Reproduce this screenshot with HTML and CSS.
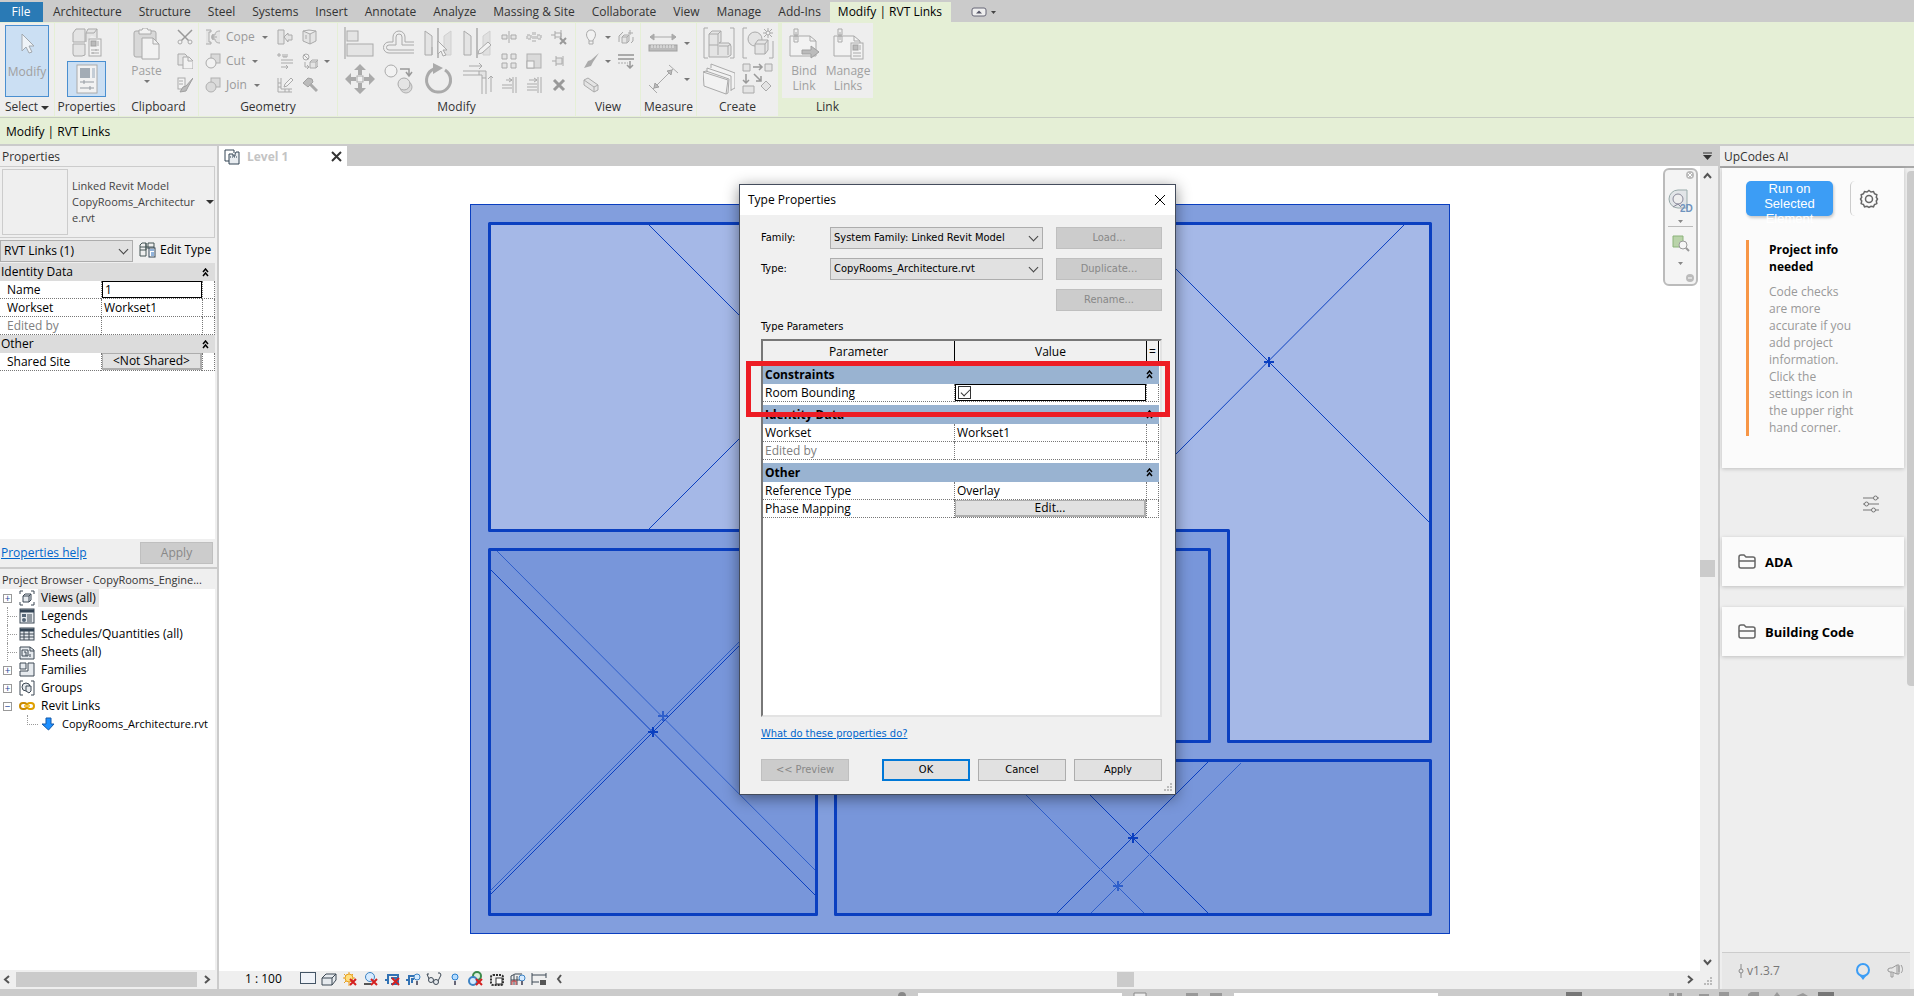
FILE: index.html
```html
<!DOCTYPE html>
<html lang="en">
<head>
<meta charset="utf-8">
<meta name="viewport" content="width=device-width, initial-scale=1">
<title>Modify | RVT Links</title>
<link rel="stylesheet" href="styles.css">
</head>
<body>

<!-- Ribbon tabs -->
<nav class="tabs">
  <button class="tab file">File</button>
  <button class="tab">Architecture</button>
  <button class="tab">Structure</button>
  <button class="tab">Steel</button>
  <button class="tab">Systems</button>
  <button class="tab">Insert</button>
  <button class="tab">Annotate</button>
  <button class="tab">Analyze</button>
  <button class="tab">Massing &amp; Site</button>
  <button class="tab">Collaborate</button>
  <button class="tab">View</button>
  <button class="tab">Manage</button>
  <button class="tab">Add-Ins</button>
  <button class="tab active">Modify | RVT Links</button>
  <button class="minimize" aria-label="Minimize ribbon">
    <svg width="26" height="10" viewBox="0 0 26 10"><rect x="1" y="1" width="14" height="8" rx="2" fill="#eee" stroke="#667"/><path d="M5 6.500l3-3 3 3z" fill="#556"/><path d="M20 4h5l-2.500 3z" fill="#444"/></svg>
  </button>
</nav>

<!-- Ribbon panels -->
<div class="ribbon">
  <section class="panel p-select">
    <div class="tools">
      <button class="big-btn on">
        <svg width="44" height="36" viewBox="0 0 44 36"><path d="M17 7v17l4-4 3 6 3-1-3-6h5z" fill="#eef3f8" stroke="#a2a8ae"/></svg>
        <span>Modify</span>
      </button>
    </div>
    <h2>Select <i class="caret dark"></i></h2>
  </section>

  <section class="panel p-props">
    <div class="tools">
      <div class="col big">
        <button aria-label="Type Properties"><svg width="32" height="32" viewBox="0 0 32 32"><path d="M2 6l3-4h9v13H2zM15 6l2-4h9v9M15 15V6h8l3-4M2 17h12v11l-3 1H3l-1-2z" class="l"/><rect x="18" y="12" width="12" height="17" class="w"/><rect x="20" y="14" width="5" height="5" class="d"/><path d="M27 14v5M20 23h8M20 26h8M25 22v2M22 25v2" class="s"/></svg></button>
        <button class="on" aria-label="Properties"><svg width="32" height="32" viewBox="0 0 32 32"><rect x="6" y="2" width="20" height="28" class="w"/><rect x="9" y="5" width="10" height="10" fill="#a3acb5"/><path d="M21 5h3v10h-3z" fill="#c4cdd6"/><path d="M9 19h14M9 25h14M13 17v4M19 23v4" stroke="#959ba2" fill="none"/></svg></button>
      </div>
    </div>
    <h2>Properties</h2>
  </section>

  <section class="panel p-clip">
    <div class="tools">
      <button class="big-btn">
        <svg width="32" height="32" viewBox="0 0 32 32"><rect x="3" y="3" width="22" height="26" rx="2" fill="#d8d8d8" stroke="#aaa"/><path d="M8 6V2h3l1-2h4l1 2h3v4z" class="w"/><path d="M11 10h11l6 6v15H11z" class="w"/><path d="M22 10v6h6" class="s"/></svg>
        <span>Paste</span>
        <i class="caret"></i>
      </button>
      <div class="col">
        <button aria-label="Cut to clipboard"><svg width="16" height="16" viewBox="0 0 16 16"><path d="M1 1l11 11M15 1L4 12" class="s2"/><circle cx="3" cy="13" r="2" class="w"/><circle cx="13" cy="13" r="2" class="w"/></svg></button>
        <button aria-label="Copy to clipboard"><svg width="16" height="16" viewBox="0 0 16 16"><path d="M1 1h7l2 2v9H1z" class="l"/><path d="M6 4h6l4 4v8H6zM11 4v4h4" class="w"/></svg></button>
        <button aria-label="Match type"><svg width="16" height="16" viewBox="0 0 16 16"><rect x="1" y="1" width="7" height="11" class="w"/><path d="M2 4h4M2 7h4" class="s"/><path d="M16 1l-7 8-3 1-3 5 6-1 2-4z" class="d"/></svg></button>
      </div>
    </div>
    <h2>Clipboard</h2>
  </section>

  <section class="panel p-geom">
    <div class="tools">
      <div class="col labelled">
        <button><svg width="16" height="16" viewBox="0 0 16 16"><path d="M1 1h5v2H4v10h2v2H1M15 2c-4 0-5 2-5 4H7v4h3c0 2 1 4 5 4M6 8h6M8 5v6" class="l"/></svg>Cope<i class="caret"></i></button>
        <button><svg width="16" height="16" viewBox="0 0 16 16"><rect x="6" y="1" width="9" height="9" class="m"/><circle cx="6" cy="10" r="5" class="w"/></svg>Cut<i class="caret"></i></button>
        <button><svg width="16" height="16" viewBox="0 0 16 16"><rect x="6" y="1" width="9" height="9" class="m"/><circle cx="6" cy="10" r="5" class="m"/></svg>Join<i class="caret"></i></button>
      </div>
      <div class="col">
        <button aria-label="Wall joins"><svg width="16" height="16" viewBox="0 0 16 16"><path d="M1 1h6v14H1zM7 8l4-4v2h4v5h-4v2z" class="l"/></svg></button>
        <button aria-label="Beam joins"><svg width="16" height="16" viewBox="0 0 16 16"><path d="M0 2h4M2 0v4M6 1v3h4V1M8 1v3M4 7h12M4 10h12" class="s"/><path d="M4 14h7M9 12l2 2-2 2" class="s"/></svg></button>
        <button aria-label="Split face"><svg width="16" height="16" viewBox="0 0 16 16"><path d="M1 1v14h14M4 1v11h11M1 6h3M1 10h3M8 12v3M12 12v3" class="s"/><path d="M7 10l1-3 6-6 2 2-6 6z" class="w"/></svg></button>
      </div>
      <div class="col">
        <button aria-label="Paint"><svg width="16" height="16" viewBox="0 0 16 16"><path d="M1 2l7 3v10l-7-3zM8 5l6-3v10l-6 3M1 2l6-1 7 1M4 6v4" class="l"/></svg></button>
        <button aria-label="Demolish set"><svg width="16" height="16" viewBox="0 0 16 16"><circle cx="4" cy="4" r="3" class="w"/><path d="M2 2l4 4M3 9v5h3M5 12l2 2-2 2" class="s"/><path d="M8 9l2-2h6v6l-2 2H8zM8 9h6v6M14 9l2-2" class="l"/></svg></button>
        <button aria-label="Demolish"><svg width="16" height="16" viewBox="0 0 16 16"><path d="M1 6l5-5 4 1 1 3-5 5z" class="d"/><path d="M8 7l7 7" stroke="#aaa" stroke-width="3"/></svg></button>
      </div>
      <div class="col carets"><span></span><span><i class="caret"></i></span><span></span></div>
    </div>
    <h2>Geometry</h2>
  </section>

  <section class="panel p-modify">
    <div class="tools">
      <div class="col big">
        <button aria-label="Align"><svg width="32" height="32" viewBox="0 0 32 32"><path d="M1 0v32" stroke="#999"/><rect x="3" y="4" width="11" height="10" class="l"/><rect x="3" y="17" width="26" height="12" class="l"/></svg></button>
        <button aria-label="Move"><svg width="32" height="32" viewBox="0 0 32 32"><path d="M16 1l6 6h-4v5h-4V7h-4zM16 31l-6-6h4v-5h4v5h4zM1 16l6-6v4h5v4H7v4zM31 16l-6 6v-4h-5v-4h5v-4z" fill="#aaa"/><rect x="13" y="13" width="6" height="6" class="w"/></svg></button>
      </div>
      <div class="col big">
        <button aria-label="Offset"><svg width="32" height="32" viewBox="0 0 32 32"><path d="M31 26H6a5 5 0 010-11h4V10a6 6 0 0112 0v5h9M31 23H6a2 2 0 010-5h7v-8a3 3 0 016 0v8h12" class="s"/></svg></button>
        <button aria-label="Copy"><svg width="32" height="32" viewBox="0 0 32 32"><circle cx="8" cy="8" r="6" class="w"/><path d="M17 6h9v6M23 9l3 4 3-4" class="s2"/><circle cx="23" cy="24" r="6" class="m"/><circle cx="21" cy="21" r="6" class="l"/></svg></button>
      </div>
      <div class="col big">
        <button aria-label="Mirror by pick axis"><svg width="32" height="32" viewBox="0 0 32 32"><path d="M3 4l7 5v19H3zM10 20v8" class="l"/><path d="M29 4l-7 5v19h7z" fill="#e0e0e0" stroke="#d0d0d0"/><path d="M16 1v30" stroke="#bbb" stroke-width="2"/><path d="M16 14v13l3-3 2 5 3-1-3-5h4z" class="w"/></svg></button>
        <button aria-label="Rotate"><svg width="32" height="32" viewBox="0 0 32 32"><path d="M12 6a12 12 0 1011 1" fill="none" stroke="#aaa" stroke-width="3"/><path d="M11 0l10 5-10 6z" fill="#aaa"/></svg></button>
      </div>
      <div class="col big">
        <button aria-label="Mirror by draw axis"><svg width="32" height="32" viewBox="0 0 32 32"><path d="M3 4l7 5v19H3z" class="l"/><path d="M29 4l-7 5v19h7z" fill="#e0e0e0" stroke="#d0d0d0"/><path d="M16 1v30" stroke="#bbb" stroke-width="2"/><path d="M17 27l1-4 9-8 3 3-9 8z" class="w"/></svg></button>
        <button aria-label="Trim corner"><svg width="32" height="32" viewBox="0 0 32 32"><path d="M2 8h16M2 12h16M21 15v16M25 15v16M8 3h13M18 0l3 3-3 3M30 29V13M27 16l3-3 3 3" class="s"/><path d="M18 8h7v7h-4v-3h-3z" class="l"/></svg></button>
      </div>
      <div class="col">
        <button aria-label="Split"><svg width="16" height="16" viewBox="0 0 16 16"><path d="M1 6h5v4H1zM10 6h5v4h-5zM8 2v12" class="l"/></svg></button>
        <button aria-label="Array"><svg width="16" height="16" viewBox="0 0 16 16"><path d="M1 1h5v5H1zM10 1h5v5h-5zM1 10h5v5H1zM10 10h5v5h-5z" class="l"/></svg></button>
        <button aria-label="Trim single"><svg width="16" height="16" viewBox="0 0 16 16"><path d="M1 8h10M1 11h10M12 0v16M15 0v16M5 3h6M8 1l3 2-3 2" class="s"/></svg></button>
      </div>
      <div class="col">
        <button aria-label="Split with gap"><svg width="16" height="16" viewBox="0 0 16 16"><path d="M1 6h4v4H1zM11 6h4v4h-4zM7 3v10M9 3v10" class="l" stroke-dasharray="3 1"/></svg></button>
        <button aria-label="Scale"><svg width="16" height="16" viewBox="0 0 16 16"><rect x="1" y="1" width="14" height="14" class="m"/><rect x="1" y="8" width="7" height="7" class="w"/></svg></button>
        <button aria-label="Trim multiple"><svg width="16" height="16" viewBox="0 0 16 16"><path d="M1 7h10M1 10h10M1 13h10M12 0v16M15 0v16M3 3h8M8 1l3 2-3 2" class="s"/></svg></button>
      </div>
      <div class="col">
        <button aria-label="Unpin"><svg width="16" height="16" viewBox="0 0 16 16"><path d="M0 6h4M4 2v8M4 4h6v4H4M10 1v8" class="s"/><path d="M9 9l6 6M15 9l-6 6" stroke="#999" stroke-width="2"/></svg></button>
        <button aria-label="Pin"><svg width="16" height="16" viewBox="0 0 16 16"><path d="M1 8h4M5 3v10M5 5h6v6H5M12 3v10" class="l"/></svg></button>
        <button aria-label="Delete"><svg width="16" height="16" viewBox="0 0 16 16"><path d="M3 3l10 10M13 3L3 13" stroke="#999" stroke-width="3"/></svg></button>
      </div>
    </div>
    <h2>Modify</h2>
  </section>

  <section class="panel p-view">
    <div class="tools">
      <div class="col">
        <button aria-label="Hide elements"><svg width="16" height="16" viewBox="0 0 16 16"><path d="M6 11C2 7 3 1 8 1s6 6 2 10v4H6zM6 12h4" class="w"/></svg></button>
        <button aria-label="Override graphics"><svg width="16" height="16" viewBox="0 0 16 16"><path d="M16 0l-8 7-3 1-4 7 7-2 2-4z" fill="#aaa"/></svg></button>
        <button aria-label="Selection box"><svg width="16" height="16" viewBox="0 0 16 16"><path d="M1 3l4-2 10 7v5l-4 2L1 8zM1 3l10 7v5M11 10l4-2" class="l"/></svg></button>
      </div>
      <div class="col carets"><span><i class="caret"></i></span><span><i class="caret"></i></span><span></span></div>
      <div class="col">
        <button aria-label="Displace elements"><svg width="16" height="16" viewBox="0 0 16 16"><path d="M4 8l2-2h5v6l-2 2H4zM4 8h5v6M9 8l2-2M1 13V7l4-4M15 8v4l-2 2M12 1v5M10 4h5" class="l"/></svg></button>
        <button aria-label="Linework"><svg width="16" height="16" viewBox="0 0 16 16"><path d="M0 2h16M0 6h16" stroke="#aaa" stroke-width="2"/><path d="M0 10h10" stroke="#aaa" stroke-dasharray="2 1"/><path d="M12 8v6M9 12l3 3 3-3" class="s2"/></svg></button>
      </div>
    </div>
    <h2>View</h2>
  </section>

  <section class="panel p-measure">
    <div class="tools">
      <div class="col big">
        <button aria-label="Measure"><svg width="32" height="32" viewBox="0 0 32 32"><path d="M3 10h26M7 7l-4 3 4 3zM25 7l4 3-4 3z" fill="#aaa" stroke="#aaa"/><rect x="2" y="18" width="28" height="6" class="d"/><path d="M5 18v3M8 18v3M11 18v3M14 18v3M17 18v3M20 18v3M23 18v3M26 18v3" stroke="#eee"/></svg></button>
        <button aria-label="Dimension"><svg width="32" height="32" viewBox="0 0 32 32"><path d="M6 26L26 6M2 22l8 8M22 2l9 8" class="s"/><path d="M7 25l1-5 4 4zM25 7l-5 1 4 4z" class="d"/></svg></button>
      </div>
      <div class="col big carets"><span><i class="caret"></i></span><span><i class="caret"></i></span></div>
    </div>
    <h2>Measure</h2>
  </section>

  <section class="panel p-create">
    <div class="tools">
      <div class="col big">
        <button aria-label="Create assembly"><svg width="32" height="32" viewBox="0 0 32 32"><path d="M5 1H1v30h4M27 1h4v30h-4" class="s"/><path d="M6 7l3-3h9v11l-2 1h10l2 3v9l-3 2H6zM6 7h9v21M18 4l-3 3M6 18h9M16 19h9v9M25 19l3-2" class="l"/></svg></button>
        <button aria-label="Create parts"><svg width="32" height="32" viewBox="0 0 32 32"><path d="M8 5V1l24 9v15l-4 2" class="w"/><path d="M4 9V5l24 8v15" class="w"/><path d="M0 9l1 14 22 8 2-14z" class="w"/><path d="M0 9l3-1 23 8-1 14-2 1" class="s"/></svg></button>
      </div>
      <div class="col big">
        <button aria-label="Create group"><svg width="32" height="32" viewBox="0 0 32 32"><path d="M5 1H1v30h4M27 31h4V14" class="s"/><circle cx="13" cy="12" r="7" class="l"/><path d="M13 17l3-4h10v10l-3 4H13zM13 17h10v10M23 17l3-4" class="l"/><path d="M26 1v10M21 6h10M22 2l8 8M30 2l-8 8" class="s"/><circle cx="26" cy="6" r="2" class="w"/></svg></button>
        <button aria-label="Create similar"><svg width="32" height="32" viewBox="0 0 32 32"><path d="M1 1h7v7H1zM23 1h7v7h-7zM1 23h11v7H1zM24 18l5 5-5 5-5-5z" class="l"/><path d="M11 4h9M17 1l3 3-3 3M4 11v9M1 17l3 3 3-3M12 11l7 7M19 13v5h-5" class="s2"/></svg></button>
      </div>
    </div>
    <h2>Create</h2>
  </section>

  <section class="panel p-link">
    <div class="tools">
      <button class="big-btn">
        <svg width="32" height="32" viewBox="0 0 32 32"><path d="M2 8h20l6 5v15H2z" class="w"/><path d="M22 8v5h6" class="s"/><path d="M6 1h4v6H6zM6 8h4v6H6zM8 4v8" class="s"/><path d="M14 22h9v-4l8 6-8 6v-4h-9z" class="d"/></svg>
        <span>Bind<br>Link</span>
      </button>
      <button class="big-btn">
        <svg width="32" height="32" viewBox="0 0 32 32"><path d="M2 8h20l6 5v15H2z" class="w"/><path d="M22 8v5h6" class="s"/><path d="M6 1h4v6H6zM6 8h4v6H6zM8 4v8" class="s"/><rect x="19" y="15" width="12" height="16" class="w"/><rect x="21" y="17" width="5" height="5" class="d"/><path d="M28 17v5M21 25h8M21 28h8" class="s"/></svg>
        <span>Manage<br>Links</span>
      </button>
    </div>
    <h2>Link</h2>
  </section>
</div>
<div class="options">Modify | RVT Links</div>

<main class="work">

  <!-- Properties + project browser -->
  <aside class="left">
    <h3>Properties</h3>
    <button class="type-selector">
      <span class="thumb"></span>
      <span class="type-name">Linked Revit Model<br>CopyRooms_Architectur<br>e.rvt</span>
      <i class="caret dark"></i>
    </button>
    <div class="filter">
      <div class="combo"><select aria-label="Element filter"><option>RVT Links (1)</option></select></div>
      <button class="edit-type"><svg width="17" height="16" viewBox="0 0 17 16"><path d="M1 8V3l2-2h4v7zM9 7V1h6v5M7 8V1M1 8v6h6V8M1 5h14" fill="none" stroke="#455"/><rect x="10" y="6" width="6" height="9" fill="#fff" stroke="#345"/><path d="M11 8h4M12 11h3M12 13h3" stroke="#2468b8"/></svg>Edit Type</button>
    </div>
    <div class="grid-wrap">
      <table class="props">
        <colgroup><col><col class="col-value"><col class="col-end"></colgroup>
        <tr class="group"><th colspan="2">Identity Data</th><th><svg width="7" height="9" viewBox="0 0 7 9"><path d="M1 4l2.500-3L6 4M1 8l2.500-3L6 8" class="up"/></svg></th></tr>
        <tr><td><label for="name">Name</label></td><td class="field"><input id="name" type="text" value="1"></td><td></td></tr>
        <tr><td>Workset</td><td>Workset1</td><td></td></tr>
        <tr class="dim"><td>Edited by</td><td></td><td></td></tr>
        <tr class="group"><th colspan="2">Other</th><th><svg width="7" height="9" viewBox="0 0 7 9"><path d="M1 4l2.500-3L6 4M1 8l2.500-3L6 8" class="up"/></svg></th></tr>
        <tr><td>Shared Site</td><td class="field"><button class="cell-btn">&lt;Not Shared&gt;</button></td><td></td></tr>
      </table>
    </div>
    <div class="props-foot"><a href="#">Properties help</a><button class="btn" disabled>Apply</button></div>

    <h3 class="browser-head">Project Browser - CopyRooms_Engine...</h3>
    <ul class="tree">
      <li><i class="exp">+</i><svg width="16" height="16" viewBox="0 0 16 16"><path d="M4 1H1v3M12 1h3v3M1 12v3h3M15 12v3h-3" class="k"/><path d="M4 6l2-2h6v6l-2 2H4zM4 6h6v6M10 6l2-2" class="k g"/></svg><span class="sel">Views (all)</span></li>
      <li><i class="dots"></i><svg width="16" height="16" viewBox="0 0 16 16"><rect x="1" y="1" width="14" height="14" class="k g"/><path d="M1 3h14" stroke="#345" stroke-width="3"/><rect x="3" y="6" width="4" height="3" fill="#567"/><circle cx="5" cy="12" r="2" fill="#567"/><path d="M8 7h5M8 9h5M8 11h5M8 13h5" class="k"/></svg><span>Legends</span></li>
      <li><i class="dots"></i><svg width="16" height="16" viewBox="0 0 16 16"><rect x="1" y="2" width="14" height="12" class="k g"/><path d="M1 4h14" stroke="#345" stroke-width="3"/><path d="M1 8h14M1 11h14M5 4v10M10 4v10" class="k"/></svg><span>Schedules/Quantities (all)</span></li>
      <li><i class="dots"></i><svg width="16" height="16" viewBox="0 0 16 16"><path d="M1 3h10l4 3v9H1z" class="k g"/><path d="M3 6h6v6H3zM5 8h2v4M11 3v4h4M11 10v3" class="k"/></svg><span>Sheets (all)</span></li>
      <li><i class="exp">+</i><svg width="16" height="16" viewBox="0 0 16 16"><path d="M1 1h6v6H1zM1 9h6V9h2V1h6v13H1z" class="k g"/></svg><span>Families</span></li>
      <li><i class="exp">+</i><svg width="16" height="16" viewBox="0 0 16 16"><path d="M4 1H1v14h3M12 1h3v14h-3" class="k"/><circle cx="7" cy="7" r="4" class="k g"/><path d="M7 6h5v5l-2 2-3-2z" class="k g"/></svg><span>Groups</span></li>
      <li><i class="exp">−</i><svg width="16" height="16" viewBox="0 0 16 16"><rect x="1" y="5" width="7" height="6" rx="3" fill="none" stroke="#c98a00" stroke-width="2"/><rect x="8" y="5" width="7" height="6" rx="3" fill="none" stroke="#dfa000" stroke-width="2"/><path d="M5 8h6" stroke="#f5c542" stroke-width="2"/></svg><span>Revit Links</span></li>
      <li class="child"><i class="dots"></i><svg width="16" height="16" viewBox="0 0 16 16"><path d="M6 2h5v6h3l-5.500 6L2 8h4z" fill="#1e90ff" stroke="#1559a8"/></svg><span>CopyRooms_Architecture.rvt</span></li>
    </ul>
    <div class="hscroll">
      <svg width="14" height="15" viewBox="0 0 14 15"><path d="M9 4L5 7.500 9 11" class="arr"/></svg>
      <i></i>
      <svg width="14" height="15" viewBox="0 0 14 15"><path d="M5 4l4 3.500L5 11" class="arr"/></svg>
    </div>
  </aside>

  <!-- Drawing area -->
  <section class="view">
    <div class="view-tabs">
      <div class="view-tab"><svg width="16" height="16" viewBox="0 0 16 16"><path d="M5 12H1V1h9v3" fill="#fff" stroke="#345"/><path d="M5 5h4v2h2V5l1-2h3v12H5z" fill="#e8ecf0" stroke="#345"/><path d="M6 8h8" stroke="#345" stroke-dasharray="1 1"/></svg><span>Level 1</span><button aria-label="Close view"><svg width="11" height="11" viewBox="0 0 11 11"><path d="M1 1l9 9M10 1L1 10" stroke="#333" stroke-width="2"/></svg></button></div>
      <svg class="tab-menu" width="9" height="8" viewBox="0 0 9 8"><path d="M0 1h9" stroke="#333" stroke-width="1"/><path d="M0 3h9L4.500 8z" fill="#333"/></svg>
    </div>
    <div class="canvas-row">
      <div class="canvas">
        <svg class="plan" width="980" height="730" viewBox="470 204 980 730">
          <rect x="470.500" y="204.500" width="979" height="729" fill="#829edd" stroke="#0a3fc0"/>
          <g stroke="#0a3fc0" stroke-width="3" stroke-linejoin="round">
            <path d="M489.500 223.500h941v518h-202v-211h-739z" fill="#a5b8e7"/>
            <rect x="489.500" y="549.500" width="327" height="365" fill="#7896da"/>
            <path d="M835.500 549.500h374v192h-374z" fill="#7896da"/>
            <rect x="835.500" y="760.500" width="595" height="154" fill="#7896da"/>
          </g>
          <g fill="none" stroke="#0a3fc0">
            <path d="M647 223L801 377 648 530M1404 225L1175 455M1175 268l255 255"/>
            <path d="M490 569l325 326M490 895L740 645M1090 795l118 118M1057 913l151-151"/>
            <path d="M497 551l318 319M490 891L740 641M1026 795l118 118M1091 913l150-150" stroke="#2f5fcb"/>
          </g>
          <path d="M1264 362h10M1269 357v10M648 732h10M653 727v10M1128 838h10M1133 833v10" stroke="#0a3fc0" stroke-width="2"/>
          <path d="M658 716h10M663 711v10M1113 886h10M1118 881v10" stroke="#2f5fcb" stroke-width="2"/>
        </svg>
        <div class="navbar">
          <svg width="35" height="118" viewBox="0 0 35 118">
            <rect x="1" y="1" width="33" height="116" rx="5" fill="#f4f4f4" stroke="#bbb" stroke-width="2"/>
            <circle cx="27" cy="7" r="4" fill="#bbb"/><path d="M25 5l4 4M29 5l-4 4" stroke="#fff"/>
            <path d="M15 22h9v18h-9a9 9 0 010-18z" fill="#e2e5e8" stroke="#9aa"/><circle cx="15" cy="31" r="5" fill="#eee" stroke="#889"/><path d="M10 39l5-3 3 3" fill="none" stroke="#889"/>
            <text x="17" y="44" class="two-d">2D</text>
            <path d="M15 52h5l-2.500 3zM15 94h5l-2.500 3z" fill="#888"/>
            <path d="M5 58.500h25" stroke="#bbb"/>
            <path d="M10 68h10v11H10z" fill="#b9d3a9" stroke="#8cb37a"/><circle cx="20" cy="77" r="4" fill="#f6f6f6" stroke="#999"/><path d="M23 80l3 3" stroke="#999" stroke-width="2"/>
            <circle cx="27" cy="110" r="4" fill="#bbb"/><path d="M25 110h4" stroke="#fff"/>
          </svg>
        </div>
      </div>
      <div class="vscroll">
        <svg width="15" height="18" viewBox="0 0 15 18"><path d="M4 12l3.500-4 3.500 4" class="arr"/></svg>
        <i></i>
        <svg width="15" height="18" viewBox="0 0 15 18"><path d="M4 7l3.500 4L11 7" class="arr"/></svg>
      </div>
    </div>
    <div class="view-bar">
      <span class="scale">1 : 100</span>
      <div class="view-icons">
        <svg width="16" height="16" viewBox="0 0 16 16"><rect x="0.500" y="1.500" width="15" height="11" fill="#f0f3f8" stroke="#456"/></svg>
        <svg width="16" height="16" viewBox="0 0 16 16"><path d="M1 7l4-4h10v6l-4 5H1zM1 7h10v7M11 7l4-4" class="k g"/></svg>
        <svg width="16" height="16" viewBox="0 0 16 16"><path d="M7 1v14M1 7h12M2 3l9 9M11 3l-9 9" stroke="#e8a020"/><circle cx="7" cy="7" r="4" fill="#ffdf80" stroke="#e8a020"/><path d="M8 8l6 6M14 8l-6 6" class="r"/></svg>
        <svg width="16" height="16" viewBox="0 0 16 16"><circle cx="7" cy="6" r="4.500" fill="#d6ebff" stroke="#3d83c4"/><path d="M1 13h7" stroke="#555" stroke-width="2"/><path d="M8 8l6 6M14 8l-6 6" class="r"/></svg>
        <svg width="16" height="16" viewBox="0 0 16 16"><path d="M1 9h3M4 3v10M4 4h10v9M7 7h5v6H7" fill="none" stroke="#3272b4" stroke-width="2"/><path d="M8 7l7 7M15 7l-7 7" class="r"/></svg>
        <svg width="16" height="16" viewBox="0 0 16 16"><path d="M1 9h2M4 4v10M4 5h5M6 8h3M7 8v4" fill="none" stroke="#3272b4" stroke-width="2"/><circle cx="12" cy="6" r="3" fill="#d6ebff" stroke="#3d83c4"/><path d="M11 10h2v4h-2z" fill="#667"/></svg>
        <svg width="16" height="16" viewBox="0 0 16 16"><path d="M1 3l2 5M1 3h2M12 2h2l1 2-3 6" class="k"/><circle cx="5" cy="9" r="2.500" class="k g"/><circle cx="10" cy="11" r="2.500" class="k g"/></svg>
        <svg width="16" height="16" viewBox="0 0 16 16"><circle cx="8" cy="6" r="3" fill="#b4dcff" stroke="#2a7fd0"/><path d="M7 10h2v4H7z" fill="#667"/></svg>
        <svg width="16" height="16" viewBox="0 0 16 16"><circle cx="9" cy="5" r="4" fill="#d9efd9" stroke="#3a8a4a" stroke-width="2"/><circle cx="5" cy="10" r="4" fill="#d6ebff" stroke="#3d83c4" stroke-width="2"/><path d="M8 8l6 6M14 8l-6 6" class="r"/></svg>
        <svg width="16" height="16" viewBox="0 0 16 16"><rect x="2" y="4" width="12" height="10" rx="2" fill="none" stroke="#333" stroke-width="2" stroke-dasharray="2 1"/><rect x="7" y="7" width="6" height="6" fill="#fff" stroke="#333"/></svg>
        <svg width="16" height="16" viewBox="0 0 16 16"><path d="M1 5l4-2h7M1 5v9M4 4v10M7 5v9M1 9h10" class="k"/><path d="M2 14v-4h4v4" fill="none" stroke="#c33"/><circle cx="12" cy="7" r="3" fill="#d6ebff" stroke="#3d83c4"/><path d="M11 10h2v4h-2z" fill="#667"/></svg>
        <svg width="16" height="16" viewBox="0 0 16 16"><path d="M1 2v12M15 2v5M1 4h14M1 11h7" class="k"/><rect x="9" y="9" width="6" height="5" fill="#555"/></svg>
        <svg width="16" height="16" viewBox="0 0 16 16"><path d="M9 4L6 8l3 4" class="arr"/></svg>
      </div>
      <div class="view-hscroll"><i></i></div>
      <svg width="15" height="15" viewBox="0 0 15 15"><path d="M5 4l4 3.500L5 11" class="arr"/></svg>
      <svg class="grip" width="9" height="9" viewBox="0 0 9 9"><path d="M6 0h2v2H6zM3 3h2v2H3zM6 3h2v2H6zM0 6h2v2H0zM3 6h2v2H3zM6 6h2v2H6z" fill="#bbb"/></svg>
    </div>
  </section>

  <!-- UpCodes panel -->
  <aside class="right">
    <h3>UpCodes AI</h3>
    <div class="up-body">
      <div class="up-main">
        <div class="card intro">
          <div class="up-actions">
            <button class="run">Run on Selected Element</button>
            <button class="gear" aria-label="Settings"><svg width="20" height="20" viewBox="0 0 20 20"><path d="M10 1.500l2 1.500 2.500-.5 1 2.300 2.300 1-.5 2.500L18.500 10l-1.200 2 .5 2.500-2.300 1-1 2.300-2.500-.5-2 1.200-2-1.200-2.500.5-1-2.300-2.300-1 .5-2.500L1.500 10l1.200-1.700-.5-2.500 2.300-1 1-2.300L8 3z" fill="none" stroke="#666" stroke-width="1.500"/><circle cx="10" cy="10" r="3.500" fill="none" stroke="#666" stroke-width="1.500"/></svg></button>
          </div>
          <div class="notice">
            <h4>Project info needed</h4>
            <p>Code checks are more accurate if you add project information. Click the settings icon in the upper right hand corner.</p>
          </div>
        </div>
        <button class="sliders" aria-label="Filter"><svg width="16" height="18" viewBox="0 0 16 18"><path d="M0 3h16M0 9h16M0 15h16" stroke="#777" stroke-width="1"/><g fill="#eee" stroke="#777"><circle cx="12.500" cy="3" r="2"/><circle cx="3.500" cy="9" r="2"/><circle cx="10.500" cy="15" r="2"/></g></svg></button>
        <button class="card folder"><svg width="18" height="16" viewBox="0 0 18 16"><path d="M1 3a2 2 0 012-2h3l2 2h7a2 2 0 012 2v7a2 2 0 01-2 2H3a2 2 0 01-2-2zM1 7h16" fill="none" stroke="#666" stroke-width="1.500"/></svg>ADA</button>
        <button class="card folder"><svg width="18" height="16" viewBox="0 0 18 16"><path d="M1 3a2 2 0 012-2h3l2 2h7a2 2 0 012 2v7a2 2 0 01-2 2H3a2 2 0 01-2-2zM1 7h16" fill="none" stroke="#666" stroke-width="1.500"/></svg>Building Code</button>
      </div>
      <div class="up-scroll"><i></i></div>
    </div>
    <footer class="up-foot">
      <svg width="6" height="14" viewBox="0 0 6 14"><path d="M3 0v5M3 9v5" stroke="#888"/><circle cx="3" cy="7" r="2" fill="none" stroke="#888"/></svg>
      <span>v1.3.7</span>
      <svg class="pin" width="14" height="18" viewBox="0 0 14 18"><circle cx="7" cy="8" r="6" fill="none" stroke="#3c9df5" stroke-width="2"/><path d="M4 14h6l-3 4z" fill="#3c9df5"/></svg>
      <svg width="16" height="14" viewBox="0 0 16 14"><path d="M1 5l2-1h2l5-3v9L5 8H3L1 7zM4 8v5h2V9M12 2v6M14 1c2 3 2 6 0 8M10 1h2v9h-2" fill="none" stroke="#999"/></svg>
    </footer>
  </aside>
</main>

<!-- Status bar, runs past the bottom edge -->
<div class="status">
  <svg class="status-search" width="12" height="6" viewBox="0 0 12 6"><path d="M2 6a4 4 0 018 0z" fill="#888"/></svg>
  <span class="status-box"></span>
  <svg width="100" height="6" viewBox="0 0 100 6"><path d="M6 6V3h12v3" fill="#eee" stroke="#888"/><path d="M58 3h12v3H58zM82 3h12v3H82z" fill="#999"/></svg>
  <span class="status-box"></span>
  <svg class="status-icons" width="270" height="6" viewBox="0 0 270 6"><path d="M2 2h16v4H2zM254 2h16v4h-16z" fill="#777"/><path d="M105 3h5v3h-5zM113 3h5v3h-5zM135 4h10v2h-10zM155 2h10v4h-10zM184 4l3-2h8v4h-11zM210 6l3-4 3 4zM232 6l7-3 5 3z" fill="#999"/></svg>
</div>

<!-- Type Properties dialog -->
<div class="dialog" role="dialog" aria-label="Type Properties">
  <div class="title"><span>Type Properties</span><button aria-label="Close"><svg width="12" height="12" viewBox="0 0 12 12"><path d="M1 1l10 10M11 1L1 11" stroke="#000"/></svg></button></div>
  <div class="dialog-body">
    <div class="form">
      <label for="family">Family:</label>
      <div class="combo"><select id="family"><option>System Family: Linked Revit Model</option></select></div>
      <button class="btn" disabled>Load...</button>
      <label for="type">Type:</label>
      <div class="combo"><select id="type"><option>CopyRooms_Architecture.rvt</option></select></div>
      <button class="btn" disabled>Duplicate...</button>
      <button class="btn rename" disabled>Rename...</button>
    </div>
    <div class="caption">Type Parameters</div>
    <div class="params-wrap">
      <table class="params">
        <colgroup><col><col class="col-value"><col class="col-end"></colgroup>
        <tr class="head"><th>Parameter</th><th>Value</th><th>=</th></tr>
        <tr class="group"><th colspan="2">Constraints</th><th><svg width="7" height="9" viewBox="0 0 7 9"><path d="M1 4l2.500-3L6 4M1 8l2.500-3L6 8" class="up"/></svg></th></tr>
        <tr><td><label for="bounding">Room Bounding</label></td><td class="field"><span class="check-cell"><input id="bounding" type="checkbox" checked></span></td><td></td></tr>
        <tr class="group"><th colspan="2">Identity Data</th><th><svg width="7" height="9" viewBox="0 0 7 9"><path d="M1 4l2.500-3L6 4M1 8l2.500-3L6 8" class="up"/></svg></th></tr>
        <tr><td>Workset</td><td>Workset1</td><td></td></tr>
        <tr class="dim"><td>Edited by</td><td></td><td></td></tr>
        <tr class="group"><th colspan="2">Other</th><th><svg width="7" height="9" viewBox="0 0 7 9"><path d="M1 4l2.500-3L6 4M1 8l2.500-3L6 8" class="up"/></svg></th></tr>
        <tr><td>Reference Type</td><td>Overlay</td><td></td></tr>
        <tr><td>Phase Mapping</td><td class="field"><button class="cell-btn">Edit...</button></td><td></td></tr>
      </table>
      <div class="highlight"></div>
    </div>
    <a class="what" href="#">What do these properties do?</a>
    <div class="actions">
      <button class="btn preview" disabled>&lt;&lt; Preview</button>
      <button class="btn ok">OK</button>
      <button class="btn">Cancel</button>
      <button class="btn">Apply</button>
    </div>
  </div>
  <svg class="grip" width="9" height="9" viewBox="0 0 9 9"><path d="M6 0h2v2H6zM3 3h2v2H3zM6 3h2v2H6zM0 6h2v2H0zM3 6h2v2H3zM6 6h2v2H6z" fill="#bbb"/></svg>
</div>

</body>
</html>
```

FILE: styles.css
```css
* {
  box-sizing: border-box;
}

body {
  margin: 0;
  height: 100vh;
  display: flex;
  flex-direction: column;
  overflow: hidden;
  position: relative;
  background: #cbcbcb;
  color: #000;
  font-family: "Open Sans", "Noto Sans", sans-serif;
  font-size: 12px;
  line-height: 18px;
}

button, input, select {
  font: inherit;
  color: inherit;
  margin: 0;
  padding: 0;
  border: 0;
  background: none;
}

h2, h3, h4, p, ul {
  margin: 0;
  padding: 0;
  font-size: 12px;
  font-weight: normal;
}

svg {
  display: block;
  flex: none;
}

a {
  color: #0066cc;
}

/* Shared icon strokes */
.l { fill: #e4e4e4; stroke: #aaa; }
.w { fill: #f2f2f2; stroke: #aaa; }
.d { fill: #bbb; stroke: #a0a0a0; }
.m { fill: #dadada; stroke: #b0b0b0; }
.s { fill: none; stroke: #aaa; }
.s2 { fill: none; stroke: #999; stroke-width: 1.5; }
.k { fill: none; stroke: #3d4854; }
.g { fill: #e6eaee; }
.r { fill: none; stroke: #d42020; stroke-width: 2; }
.arr { fill: none; stroke: #555; stroke-width: 2; }
.up { fill: none; stroke: #000; stroke-width: 1.5; }

.caret {
  display: inline-block;
  flex: none;
  border: 3px solid transparent;
  border-top-color: #777;
  border-bottom: 0;
}

.caret.dark {
  border-width: 4px;
  border-top-color: #333;
  border-bottom: 0;
  vertical-align: middle;
}

/* Ribbon tabs */
.tabs {
  display: flex;
  flex: none;
  height: 22px;
  padding-top: 2px;
}

.tab {
  padding: 0 9px 0 8px;
  line-height: 20px;
  color: #333;
  white-space: nowrap;
}

.tab.file {
  width: 43px;
  margin-right: 2px;
  background: #2a7ab5;
  color: #fff;
}

.tab.active {
  background: #e5efd6;
  color: #000;
}

.minimize {
  margin-left: 20px;
}

/* Ribbon panels */
.ribbon {
  display: flex;
  flex: none;
  gap: 1px;
  height: 96px;
  padding: 1px 0;
  background: #e5efd6;
  border-bottom: 1px solid #c6cbc2;
}

.panel {
  flex: none;
  background: #eee;
}

.panel h2 {
  text-align: center;
  color: #333;
}

.panel .tools {
  display: flex;
  height: 75px;
  padding-top: 2px;
}

.p-select { width: 54px; }
.p-props { width: 63px; }
.p-clip { width: 79px; }
.p-geom { width: 138px; }
.p-modify { width: 237px; }
.p-view { width: 64px; }
.p-measure { width: 55px; }
.p-create { width: 81px; }
.p-link { width: 91px; margin-left: 3px; }

.p-select .tools { padding-left: 5px; }
.p-props .tools { padding-left: 12px; }
.p-clip .tools { padding-left: 8px; gap: 6px; }
.p-geom .tools { padding-left: 2px; }
.p-modify .tools,
.p-measure .tools,
.p-create .tools { padding-left: 2px; }
.p-view .tools { padding-left: 2px; }
.p-link h2 { background: #e5efd6; }

.col {
  display: flex;
  flex-direction: column;
  width: 25px;
}

.col button,
.col span {
  display: flex;
  align-items: center;
  justify-content: center;
  height: 24px;
}

.col.big {
  width: 39px;
}

.col.big button,
.col.big span {
  height: 36px;
}

.col.carets,
.col.big.carets {
  width: 10px;
}

.col.labelled {
  width: 71px;
  color: #9a9a9a;
}

.col.labelled button {
  justify-content: flex-start;
  padding-left: 4px;
}

.col.labelled svg {
  margin-right: 5px;
}

.col.labelled .caret {
  margin-left: 7px;
}

.col.big .on,
.big-btn.on {
  background: #cbdff3;
  border: 1px solid #4a8fd0;
}

.big-btn {
  display: flex;
  flex-direction: column;
  align-items: center;
  width: 39px;
  height: 72px;
  padding-top: 2px;
  color: #a0a0a0;
  line-height: 15px;
}

.big-btn span {
  margin-top: 3px;
}

.big-btn .caret {
  margin-top: 2px;
}

.big-btn svg {
  margin-top: 1px;
}

.p-select .big-btn,
.p-link .big-btn {
  width: 44px;
}

.p-select .big-btn {
  padding-top: 0;
}

.p-select .big-btn span {
  margin-top: 1px;
}

.options {
  flex: none;
  height: 28px;
  padding-left: 6px;
  line-height: 28px;
  background: #e5efd6;
  border-bottom: 2px solid #cbcbcb;
}

/* Main work area */
.work {
  display: flex;
  flex: 1;
  min-height: 0;
}

/* Left column */
.left {
  display: flex;
  flex-direction: column;
  width: 219px;
  flex: none;
  background: #efefef;
  border-right: 2px solid #cbcbcb;
}

.left h3,
.right h3 {
  flex: none;
  height: 20px;
  padding: 2px 2px 0;
  color: #333;
  white-space: nowrap;
}

.left .browser-head {
  font-size: 11px;
}

.type-selector {
  display: flex;
  align-items: center;
  flex: none;
  width: 215px;
  height: 72px;
  padding-left: 2px;
  border: 1px solid #ccc;
  border-left: 0;
  text-align: left;
  color: #444;
  line-height: 16px;
}

.thumb {
  width: 66px;
  height: 66px;
  flex: none;
  border: 1px solid #ccc;
}

.type-name {
  flex: 1;
  margin-left: 4px;
  font-size: 11px;
}

.filter {
  display: flex;
  flex: none;
  align-items: center;
  height: 25px;
}

.filter .combo {
  width: 133px;
}

.combo {
  position: relative;
  height: 22px;
}

.combo select {
  appearance: none;
  width: 100%;
  height: 100%;
  padding: 0 20px 0 3px;
  border: 1px solid #adadad;
  background: #e1e1e1;
}

.combo::after {
  content: "";
  position: absolute;
  right: 6px;
  top: 6px;
  width: 6px;
  height: 6px;
  border: solid #444;
  border-width: 0 1px 1px 0;
  transform: rotate(45deg);
  pointer-events: none;
}

.edit-type {
  display: flex;
  align-items: center;
  gap: 4px;
  margin-left: 6px;
  padding-bottom: 2px;
  white-space: nowrap;
}

.grid-wrap {
  width: 215px;
  height: 276px;
  flex: none;
  background: #fff;
}

table {
  width: 100%;
  table-layout: fixed;
  border-collapse: separate;
  border-spacing: 0;
}

td, th {
  height: 18px;
  padding: 0 2px;
  line-height: 16px;
  text-align: left;
  font-weight: normal;
  white-space: nowrap;
}

td {
  border-bottom: 1px dotted #777;
}

td + td {
  border-left: 1px dotted #777;
}

td:last-child {
  border-right: 1px dotted #777;
}

td.field {
  padding: 0;
}

td:first-child {
  padding-left: 7px;
}

.dim {
  color: #808080;
}

.props .col-value { width: 101px; }
.params .col-value { width: 192px; }
.col-end { width: 13px; }

.props .group th {
  padding-left: 1px;
  background: #dcdcdc;
}

.props input {
  display: block;
  width: 100%;
  height: 17px;
  padding: 0 2px;
  border: 1px solid #000;
  background: #fff;
}

.cell-btn {
  display: block;
  width: 100%;
  height: 17px;
  line-height: 14px;
  background: #e1e1e1;
  border: 1px solid #adadad;
  border-right-width: 2px;
  border-bottom-width: 2px;
}

.props-foot {
  display: flex;
  flex: none;
  align-items: center;
  justify-content: space-between;
  height: 30px;
  padding: 0 4px 0 1px;
  border-bottom: 2px solid #cbcbcb;
}

.btn {
  height: 22px;
  border: 1px solid #adadad;
  background: #e1e1e1;
  text-align: center;
}

.btn:disabled {
  border-color: #bfbfbf;
  background: #ccc;
  color: #888;
}

.props-foot .btn {
  width: 73px;
}

/* Project browser tree */
.tree {
  flex: 1;
  width: 215px;
  list-style: none;
  background: #fff;
  overflow: hidden;
}

.tree li {
  display: flex;
  align-items: center;
  height: 18px;
  padding-left: 3px;
  white-space: nowrap;
}

.tree span {
  margin-left: 3px;
  padding: 0 3px;
}

.tree .sel {
  background: #e2e2e2;
}

.exp {
  width: 9px;
  height: 9px;
  margin-right: 7px;
  border: 1px solid #999;
  font-style: normal;
  font-size: 10px;
  line-height: 7px;
  text-align: center;
  color: #234a9a;
}

.dots {
  width: 11px;
  height: 18px;
  margin: 0 1px 0 4px;
  border-left: 1px dotted #999;
  background: repeating-linear-gradient(90deg, #999 0 1px, transparent 1px 2px) 0 50% / 100% 1px no-repeat;
}

.tree .child {
  padding-left: 23px;
  font-size: 11px;
}

.child .dots {
  height: 10px;
  margin-right: 2px;
  margin-bottom: 8px;
  border-bottom: 1px dotted #999;
  background: none;
}

.tree .child span {
  padding: 0 0 0 3px;
}

.hscroll {
  display: flex;
  align-items: center;
  flex: none;
  height: 19px;
}

.hscroll i {
  width: 181px;
  height: 15px;
  margin: 0 3px 0 2px;
  background: #cbcbcb;
}

/* Drawing view */
.view {
  display: flex;
  flex: 1;
  flex-direction: column;
  min-width: 0;
  background: #efefef;
}

.view-tabs {
  display: flex;
  flex: none;
  align-items: center;
  justify-content: space-between;
  height: 20px;
  padding-right: 6px;
  background: #cbcbcb;
}

.view-tab {
  display: flex;
  align-items: center;
  width: 128px;
  height: 20px;
  padding: 1px 5px 0;
  background: #fff;
  color: #c4c4c4;
  font-weight: bold;
}

.view-tab span {
  flex: 1;
  margin-left: 7px;
}

.canvas-row {
  display: flex;
  flex: 1;
  min-height: 0;
}

.canvas {
  position: relative;
  display: flex;
  flex: 1;
  align-items: center;
  justify-content: center;
  min-width: 0;
  background: #fff;
}

.navbar {
  position: absolute;
  top: 2px;
  right: 2px;
}

.two-d {
  font: bold 10px "Liberation Sans", sans-serif;
  fill: #6f93bd;
}

.vscroll {
  display: flex;
  flex-direction: column;
  justify-content: space-between;
  align-items: flex-start;
  width: 18px;
  flex: none;
}

.vscroll i {
  width: 15px;
  height: 17px;
  background: #cbcbcb;
}

.view-bar {
  display: flex;
  flex: none;
  align-items: center;
  height: 18px;
  padding: 0 5px 2px 26px;
}

.scale {
  width: 55px;
}

.view-icons {
  display: flex;
  gap: 5px;
}

.view-hscroll {
  display: flex;
  justify-content: center;
  flex: 1;
}

.view-hscroll i {
  width: 17px;
  height: 15px;
  background: #cbcbcb;
}

.view-bar .grip {
  margin: 4px 0 0 6px;
}

/* UpCodes panel */
.right {
  display: flex;
  flex-direction: column;
  width: 196px;
  flex: none;
  background: #eee;
  border-left: 2px solid #cbcbcb;
}

.right h3 {
  height: 22px;
  padding-left: 4px;
  border-bottom: 2px solid #a8a8a8;
}

.up-body {
  display: flex;
  flex: 1;
  min-height: 0;
}

.up-main {
  display: flex;
  flex: 1;
  flex-direction: column;
  margin-left: 2px;
}

.card {
  background: #fbfbfb;
  box-shadow: 0 1px 4px rgba(0, 0, 0, 0.2);
}

.intro {
  padding: 13px 24px 32px;
}

.up-actions {
  display: flex;
  gap: 17px;
}

.run {
  width: 87px;
  height: 35px;
  padding: 0 10px;
  border-radius: 5px;
  background: #3c9df5;
  box-shadow: 1px 2px 3px rgba(0, 0, 0, 0.2);
  color: #fff;
  font: 13px/15px "Liberation Sans", Arial, sans-serif;
  display: flex;
  justify-content: center;
  align-items: flex-start;
}

.gear {
  display: flex;
  align-items: center;
  padding-left: 8px;
  border-left: 1px solid #ccc;
  border-radius: 5px;
}

.notice {
  width: 112px;
  margin-top: 24px;
  padding: 1px 0 0 20px;
  border-left: 3px solid #f79646;
  line-height: 17px;
}

.notice h4 {
  font-weight: bold;
}

.notice p {
  margin-top: 8px;
  color: #999;
}

.sliders {
  align-self: flex-end;
  margin: 27px 25px 24px 0;
}

.folder {
  display: flex;
  align-items: center;
  gap: 9px;
  height: 49px;
  margin-bottom: 21px;
  padding-left: 16px;
  font-size: 13px;
  font-weight: bold;
}

.up-scroll {
  width: 10px;
  padding: 3px 0 0 3px;
}

.up-scroll i {
  display: block;
  height: 66%;
  border-radius: 4px 0 0 4px;
  background: #cbcbcb;
}

.up-foot {
  display: flex;
  align-items: center;
  flex: none;
  height: 37px;
  margin: 0 4px 0 2px;
  padding: 0 7px 0 16px;
  background: #e7e7e7;
  border-top: 1px solid #ccc;
  color: #777;
}

.up-foot span {
  margin-left: 3px;
}

.up-foot .pin {
  margin: 0 17px 0 auto;
}

/* Status bar */
.status {
  display: flex;
  align-items: flex-end;
  flex: none;
  height: 7px;
  padding-left: 896px;
  overflow: hidden;
}

.status svg {
  margin-right: 6px;
}

.status .status-search {
  margin-right: 10px;
}

.status-box {
  flex: none;
  width: 204px;
  height: 3px;
  margin-right: 6px;
  background: #fff;
}

.status .status-icons {
  margin: 0 80px 0 auto;
}

/* Dialog */
.dialog {
  position: absolute;
  top: 184px;
  left: calc(50% - 218px);
  width: 437px;
  background: #f0f0f0;
  border: 1px solid #444c5c;
  box-shadow: 0 3px 14px rgba(0, 0, 0, 0.45);
}

.title {
  display: flex;
  align-items: center;
  justify-content: space-between;
  height: 30px;
  padding: 0 9px 0 8px;
  background: #fff;
}

.dialog-body {
  padding: 12px 13px 13px 21px;
  font-family: "DejaVu Sans Condensed", "Liberation Sans", sans-serif;
  font-size: 11px;
}

.form {
  display: grid;
  grid-template-columns: 56px 213px 106px;
  column-gap: 13px;
  row-gap: 9px;
  align-items: center;
}

.form .rename {
  grid-column: 3;
}

.caption {
  margin: 7px 0 3px;
}

.params-wrap {
  position: relative;
  height: 378px;
  padding: 0 1px 0 0;
  background: #fff;
  border: 2px solid #777;
  border-right-color: #e3e3e3;
  border-bottom-color: #e3e3e3;
  font-family: "Open Sans", "Noto Sans", sans-serif;
  font-size: 12px;
}

.params .head th {
  height: 21px;
  padding: 0;
  background: #f0f0f0;
  text-align: center;
}

.params .head th + th {
  border-left: 1px solid #000;
}

.params .head th:last-child {
  border-right: 1px solid #000;
}

.params .group th {
  height: 22px;
  padding-left: 2px;
  border-top: 3px solid #fff;
  background: #99b3d1;
  font-weight: bold;
}

.group th:last-child,
.params .group th:last-child {
  padding-left: 0;
}

.params td:first-child {
  padding-left: 2px;
}

.check-cell {
  display: flex;
  align-items: center;
  height: 17px;
  padding-left: 2px;
  border: 1px solid #000;
}

.check-cell input {
  appearance: none;
  position: relative;
  width: 13px;
  height: 13px;
  border: 1px solid #333;
  background: #fff;
}

.check-cell input:checked::after {
  content: "";
  position: absolute;
  left: 4px;
  top: 0;
  width: 4px;
  height: 8px;
  border: solid #333;
  border-width: 0 1px 1px 0;
  transform: rotate(45deg);
}

/* Red call-out box around the first group */
.highlight {
  position: absolute;
  top: 20px;
  left: -17px;
  right: -10px;
  height: 56px;
  border: 5px solid #ed1c24;
}

.what {
  display: block;
  margin: 8px 0 16px;
}

.actions {
  display: flex;
  gap: 8px;
}

.actions .btn {
  width: 88px;
}

.actions .preview {
  margin-right: auto;
}

.actions .ok {
  border: 2px solid #0078d7;
}

.dialog .grip {
  position: absolute;
  right: 2px;
  bottom: 2px;
}
```
